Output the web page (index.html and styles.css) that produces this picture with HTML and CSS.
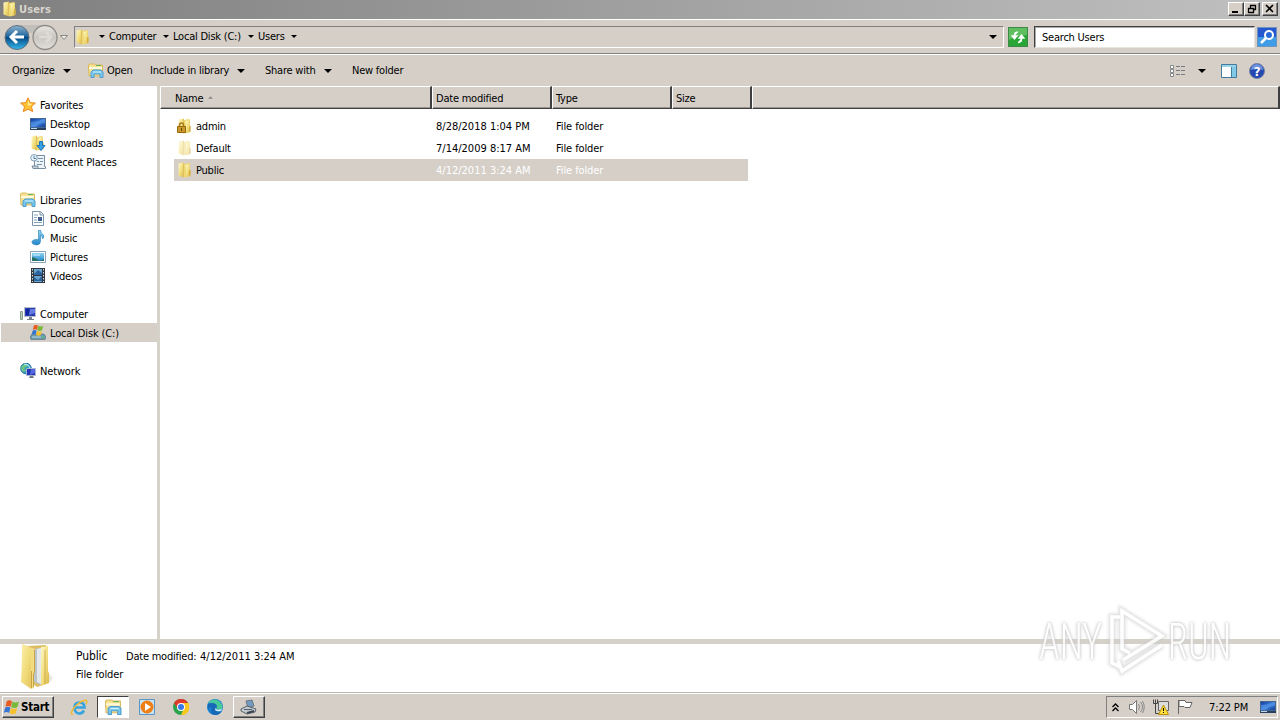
FILE: index.html
```
<!DOCTYPE html>
<html lang="en">
<head>
    <meta charset="UTF-8">
    <title>Users</title>
    <link rel="stylesheet" href="styles.css">
</head>
<body>
    <!-- Shared icons -->
    <svg class="defs" width="0" height="0">
        <defs>
            <linearGradient id="gold" x2="1" y2="1"><stop offset="0" stop-color="#fff9c9"/><stop offset=".5" stop-color="#f3df7e"/><stop offset="1" stop-color="#d9b546"/></linearGradient>
            <linearGradient id="blue" x2="1" y2="1"><stop offset="0" stop-color="#123c9c"/><stop offset=".5" stop-color="#3c7fdc"/><stop offset="1" stop-color="#123f96"/></linearGradient>
            <linearGradient id="sky" x2="0" y2="1"><stop offset="0" stop-color="#8ed4f4"/><stop offset="1" stop-color="#2386c8"/></linearGradient>
            <linearGradient id="back" x2="0" y2="1"><stop offset="0" stop-color="#8fb4cf"/><stop offset=".45" stop-color="#1f669f"/><stop offset=".5" stop-color="#064a85"/><stop offset="1" stop-color="#36b8ee"/></linearGradient>
            <linearGradient id="fwd" x2="0" y2="1"><stop offset="0" stop-color="#e9e7e3"/><stop offset=".5" stop-color="#c9c6c1"/><stop offset="1" stop-color="#e3e0db"/></linearGradient>
            <symbol id="folder" viewBox="0 0 16 16">
                <path d="M1.500 1.500L7 .5v15l-5.500-2z" fill="url(#gold)"/>
                <path d="M7 2l5-1 1 1v12l-5 1.500-1-.5z" fill="#efd873"/>
                <path d="M8.500 3L12 2v6l1.500 1v5l-4 1z" fill="url(#gold)"/>
                <path d="M6.500 1v14" stroke="#dfc15c" fill="none"/>
                <path d="M12 8.500l1.500-1v5L12 14z" fill="#d4ae3c"/>
            </symbol>
            <symbol id="library" viewBox="0 0 16 16">
                <path d="M.500 3V2l1-1h5l1 1h7v11H1z" fill="#f6e291" stroke="#d8b95f"/>
                <path d="M8 2.500h5" stroke="#62b45c"/>
                <path d="M1 5h13" stroke="#fffadb" stroke-width="2"/>
                <path d="M3 14.500V9l2-2h8l2 2v5.500h-3V11H6v3.500z" fill="#7cc8ec" stroke="#4c9cd0"/>
                <path d="M5 9h8" stroke="#c7effc"/>
            </symbol>
            <symbol id="monitor" viewBox="0 0 16 16">
                <path d="M0 2h16v10H0z" fill="#46678d"/>
                <path d="M1 3h14v8H1z" fill="url(#blue)"/>
                <path d="M1 6q7 0 13-3h1v4q-6 0-9 4H1z" fill="#5b9be9" opacity=".55"/>
                <path d="M0 12h16v2H0z" fill="#29405d"/><path d="M1 12.500h6" stroke="#bfd7e8"/>
            </symbol>
            <symbol id="pc" viewBox="0 0 16 16">
                <path d="M.500 5.500h2v8h-2z" fill="#b9d4a9" stroke="#8b9c92"/>
                <path d="M4.500 1.500h11v9h-11z" fill="#263eb0" stroke="#b7bfcc"/>
                <path d="M6 3h4l-1 6H6z" fill="#1425a0"/><path d="M10 3h5v4l-6 2z" fill="#657be4"/>
                <path d="M9 11h3v2h2v1H7v-1h2z" fill="#77818d"/>
            </symbol>
            <symbol id="flag" viewBox="0 0 16 16">
                <path d="M3.500 2q2.500-1.800 5 0L7.300 7.300q-2.500-1.600-5 0z" fill="#e95b21"/>
                <path d="M9 2.300q3 1.800 6 0L13.600 7.600q-3 1.800-5.900 0z" fill="#79b93a"/>
                <path d="M2 8.200q2.500-1.700 5 0l-1.300 5q-2.500-1.700-5 0z" fill="#3675d3"/>
                <path d="M7.500 8.500q3 1.800 5.900 0L12 13.500q-3 1.800-5.800 0z" fill="#f5c22e"/>
            </symbol>
            <symbol id="arrow" viewBox="0 0 8 4"><path d="M0 0h8L4 4z"/></symbol>
        </defs>
    </svg>

    <div class="window">
        <header class="titlebar">
            <svg class="icon"><use href="#folder"/></svg>
            <span class="title">Users</span>
            <div class="buttons">
                <button aria-label="Minimize"><svg width="12" height="10"><path d="M2 8h6" stroke="#000" stroke-width="2"/></svg></button>
                <button aria-label="Restore"><svg width="12" height="10"><path d="M4.500 4V1.500h5v4H8M4 1.500h6M2.500 4.500h5v4h-5zM2 4.500h6" fill="none" stroke="#000" stroke-width="1.300"/></svg></button>
                <button class="close" aria-label="Close"><svg width="12" height="10"><path d="M2 1l7 7M9 1L2 8" stroke="#000" stroke-width="1.600"/></svg></button>
            </div>
        </header>

        <nav class="navbar">
            <svg class="travel" width="68" height="28" viewBox="0 0 68 28">
                <path d="M15 2h27v8H15z" fill="#c2beb9"/>
                <circle cx="14" cy="14.500" r="12" fill="url(#back)" stroke="#626f7c"/>
                <path d="M8 14h13M14 8l-6 6 6 6" fill="none" stroke="#fff" stroke-width="3"/>
                <circle cx="42" cy="14.500" r="12" fill="url(#fwd)" stroke="#8e8c88" stroke-width="1.300"/>
                <path d="M36 14h12M43 9l5 5-5 5" fill="none" stroke="#dedbd6" stroke-width="2.500"/>
                <path d="M57.500 12.500h7l-3.500 4z" fill="#eee" stroke="#8b8884"/>
            </svg>
            <div class="address">
                <svg class="icon"><use href="#folder"/></svg>
                <svg class="crumb first"><use href="#arrow"/></svg><span class="w-computer">Computer</span>
                <svg class="crumb"><use href="#arrow"/></svg><span class="w-disk">Local Disk (C:)</span>
                <svg class="crumb"><use href="#arrow"/></svg><span class="w-users">Users</span>
                <svg class="crumb"><use href="#arrow"/></svg>
                <svg class="drop end"><use href="#arrow"/></svg>
            </div>
            <svg class="refresh" width="20" height="20">
                <rect x=".5" y=".5" width="19" height="19" fill="#2aa637" stroke="#3d8a48"/>
                <path d="M1 1h18v7q-9 0-18 5z" fill="#7ccd77" opacity=".65"/>
                <path d="M6.500 9V7.500q0-2 3.500-2.500M4 9h5l-2.500 3zM13.500 11v2q0 2-3.500 2.500M11 11h5l-2.500-3z" fill="#fff" stroke="#fff" stroke-width="1.300"/>
            </svg>
            <div class="search">Search Users</div>
            <svg class="go" width="20" height="20">
                <rect x=".5" y=".5" width="19" height="19" fill="#2558cf" stroke="#6d92bb"/>
                <path d="M1 10h18v9H1z" fill="#4bb9ef" opacity=".7"/>
                <circle cx="12" cy="8" r="4" fill="#2869da" stroke="#fff" stroke-width="2"/><path d="M9 11l-5 5" stroke="#fff" stroke-width="2.500"/>
            </svg>
        </nav>

        <div class="toolbar">
            <span class="item organize">Organize</span><svg class="drop"><use href="#arrow"/></svg>
            <svg class="icon open-icon"><use href="#library"/></svg><span class="item open">Open</span>
            <span class="item include">Include in library</span><svg class="drop"><use href="#arrow"/></svg>
            <span class="item share">Share with</span><svg class="drop"><use href="#arrow"/></svg>
            <span class="item new">New folder</span>
            <div class="view-tools">
                <svg width="16" height="14"><path d="M.500 1.500h3v3h-3zM.500 5.500h3v3h-3zM.500 9.500h3v3h-3z" fill="#fff" stroke="#85898c"/><path d="M6 2.500h4M11 2.500h4M6 6.500h4M11 6.500h4M6 10.500h4M11 10.500h4" stroke="#777b82"/></svg>
                <svg class="drop"><use href="#arrow"/></svg>
                <svg class="pane" width="16" height="14"><path d="M.500.500h15v13H.500z" fill="#fff" stroke="#437b9c"/><path d="M1 2h14" stroke="#99d3ea" stroke-width="2"/><path d="M10.500 3v10" stroke="#437b9c"/><path d="M11 3h4v10h-4z" fill="#80cae8"/></svg>
                <svg class="help" width="16" height="16"><circle cx="8" cy="8" r="7.500" fill="#2448b0" stroke="#7784a1"/><path d="M2 7a6 6 0 0 1 12 0q-6-2-12 0" fill="#6d91dd"/><text x="8" y="12.500">?</text></svg>
            </div>
        </div>

        <main class="body">
            <aside class="sidebar">
                <div class="row group"><svg class="icon" viewBox="0 0 16 16"><path d="M8 .8l2.200 4.800 5.200.5-3.900 3.500 1.200 5.100L8 12.100l-4.700 2.600 1.200-5.100L.600 6.100l5.200-.5z" fill="#ffc235" stroke="#e98824"/><path d="M8 3l1.400 3.500 3 .4L8 9z" fill="#fff0a0"/></svg><span>Favorites</span></div>
                <div class="row"><svg class="icon"><use href="#monitor"/></svg><span>Desktop</span></div>
                <div class="row"><svg class="icon" viewBox="0 0 16 16"><use href="#folder"/><path d="M9.500 6.500h3v4H15l-4 5-4-5h2.500z" fill="#38a2e5" stroke="#1b72b7"/></svg><span>Downloads</span></div>
                <div class="row"><svg class="icon" viewBox="0 0 16 16"><path d="M4.500 1.500h10v11h1v2h-11z" fill="#edf3f7" stroke="#798e9f"/><path d="M8 4.500h5M7 7.500h2M10 7.500h3M7 10.500h5" stroke="#6d94b2"/><circle cx="4" cy="3.800" r="3.300" fill="#e8f5ff" stroke="#839cae"/><path d="M4 2v2.500h2" fill="none" stroke="#587895"/><path d="M2 12h6v2.500H3z" fill="#c3d0da" stroke="#798e9f"/></svg><span>Recent Places</span></div>
                <div class="row group space"><svg class="icon"><use href="#library"/></svg><span>Libraries</span></div>
                <div class="row"><svg class="icon" viewBox="0 0 16 16"><path d="M2.500.500h8l3 3v11h-11z" fill="#fff" stroke="#7d94a8"/><path d="M10 1v3h3" fill="#d8e5ee" stroke="#7d94a8"/><path d="M4 4h4M4 6.500h3M4 9h3M4 11.500h8" stroke="#7fa5c4"/><path d="M8 6h4v4H8z" fill="#3f5f90"/></svg><span>Documents</span></div>
                <div class="row"><svg class="icon" viewBox="0 0 16 16"><path d="M8.500 0h2q0 3 3 5 1 2-1 4 0-3-2-4v6q0 4-4 4-5-.5-4.500-3.500Q3 9 8.500 9.500z" fill="url(#sky)" stroke="#287fb9" stroke-width=".6"/></svg><span>Music</span></div>
                <div class="row"><svg class="icon" viewBox="0 0 16 16"><path d="M.500 2.500h15v11H.500z" fill="#fff" stroke="#8ba2b4"/><path d="M2 4h12v8H2z" fill="url(#sky)"/><path d="M2 8q4 1 6 3t6-1v2H2z" fill="#286f66"/><path d="M3 6h7" stroke="#d7f4ff"/></svg><span>Pictures</span></div>
                <div class="row"><svg class="icon" viewBox="0 0 16 16"><path d="M1 0h14v15H1z" fill="#303941"/><path d="M4 1h8v6H4zM4 8h8v6H4z" fill="#68a5d1"/><path d="M4 6l4-4 4 3v2H4zM4 9l4 3 4-4v5H4z" fill="#2b639c"/><path d="M2.500 1v13M13.500 1v13" stroke="#d4dade" stroke-dasharray="1.500 1.500"/></svg><span>Videos</span></div>
                <div class="row group space"><svg class="icon"><use href="#pc"/></svg><span>Computer</span></div>
                <div class="row selected"><svg class="icon" viewBox="0 0 16 16"><path d="M2 9h12l2 3-1 2.500H1L0 12z" fill="#6c9aab" stroke="#587786" stroke-width=".7"/><path d="M2 12h9" stroke="#b6d9df"/><path d="M12 12h2" stroke="#42e05b"/><svg x="1" y="-1" width="13" height="13" viewBox="0 0 16 16"><use href="#flag"/></svg></svg><span>Local Disk (C:)</span></div>
                <div class="row group space"><svg class="icon" viewBox="0 0 16 16"><circle cx="6" cy="5.500" r="5.300" fill="#329ac5" stroke="#2374a6"/><path d="M2 3q4-4 6 0L4 5l2 3-3 1q-3-3-1-6" fill="#6ec584"/><path d="M4 1q5 0 6 4" stroke="#c9f1f4" fill="none"/><path d="M6.500 5.500h9v7h-9z" fill="#2335b5" stroke="#aab6cd"/><path d="M11 6h4v4l-5 2z" fill="#5368df"/><path d="M10 13h3l1 2H9z" fill="#6e7982"/></svg><span>Network</span></div>
            </aside>

            <section class="files">
                <div class="columns">
                    <div class="name">Name<svg class="sort" viewBox="0 0 6 3"><path d="M0 3h6L3 0z"/></svg></div>
                    <div>Date modified</div>
                    <div>Type</div>
                    <div class="size">Size</div>
                    <div class="rest"></div>
                </div>
                <div class="list">
                    <div class="file"><span class="name"><svg class="icon" viewBox="0 0 16 16"><use href="#folder"/><path d="M2.500 9V7q0-2 2-2t2 2v2" fill="none" stroke="#a77918" stroke-width="1.500"/><path d="M.500 8.500h8v6h-8z" fill="#c99a2b" stroke="#96690e"/><path d="M4.500 10v3" stroke="#704c07"/></svg>admin</span><span class="date">8/28/2018 1:04 PM</span><span class="type">File folder</span></div>
                    <div class="file faded"><span class="name"><svg class="icon"><use href="#folder"/></svg>Default</span><span class="date">7/14/2009 8:17 AM</span><span class="type">File folder</span></div>
                    <div class="file selected"><span class="name"><svg class="icon"><use href="#folder"/></svg>Public</span><span class="date">4/12/2011 3:24 AM</span><span class="type">File folder</span></div>
                </div>
            </section>
        </main>

        <footer class="details">
            <svg class="big-folder" width="36" height="46" viewBox="0 0 36 46">
                <path d="M26 26l7 8-3 4-8 3z" fill="#e3e1d8" opacity=".8"/>
                <path d="M8 2l18-1v39l-9 3-9-7z" fill="#ddbd63"/>
                <path d="M14 5l7-1v37l-7-3z" fill="#bcc5cc"/><path d="M17 5l4-1v36l-4-2z" fill="#e4e8ea"/>
                <path d="M21 3l7-1v25l1 2v10l-8 3z" fill="url(#gold)"/><path d="M25 6v34" stroke="#cfae55"/>
                <path d="M2 0l13 5v22l-1 2v15l-3 1-10-7 1-13z" fill="#f2dd82"/><path d="M2 0l9 5v39L1 38z" fill="url(#gold)" opacity=".6"/>
                <path d="M11.500 27v17M14.500 6v22l-1 2v13" stroke="#c9a545" fill="none"/>
            </svg>
            <div class="details-text">
                <div><span class="detail-name">Public</span><span class="detail-label">Date modified:</span><span class="detail-date">4/12/2011 3:24 AM</span></div>
                <div class="type">File folder</div>
            </div>
        </footer>

        <div class="taskbar">
            <button class="start"><svg width="17" height="17"><use href="#flag"/></svg>Start</button>
            <div class="tasks">
                <div class="task"><svg width="18" height="18" viewBox="0 0 18 18"><path d="M14 12.500q-2 3.500-5.500 3-4-1-4-6t5-5 5 5H5" fill="none" stroke="#36a4df" stroke-width="2.600"/><path d="M3 16.500Q-1 16 5 8.500 13 1 16.500 2.500q1 1-.5 4" fill="none" stroke="#edb930" stroke-width="1.400"/></svg></div>
                <div class="task active"><svg width="17" height="17"><use href="#library"/></svg></div>
                <div class="task"><svg width="16" height="16"><path d="M.500.500h15v15H.500z" fill="#cce2f2" stroke="#5797ca"/><circle cx="8" cy="8" r="6.500" fill="#ed7f15"/><path d="M6 4l6 4-6 4z" fill="#fff"/></svg></div>
                <div class="task"><svg width="16" height="16" viewBox="0 0 16 16"><circle cx="8" cy="8" r="8" fill="#2ba34c"/><path d="M7 4h8.500A8 8 0 0 1 8 16l3-7z" fill="#f9c71e"/><path d="M1 4L5 10 8 4h7A8 8 0 0 0 1 4" fill="#df382c"/><circle cx="8" cy="8" r="4" fill="#fff"/><circle cx="8" cy="8" r="3" fill="#3977e8"/></svg></div>
                <div class="task"><svg width="16" height="16" viewBox="0 0 16 16"><circle cx="8" cy="8" r="8" fill="#167fcf"/><path d="M1 5Q5-2 12 2q5 4 3 8-5 2-6-1 1-4-3-4-3-2-5 0" fill="#49c89a"/><path d="M1 5q7-3 9 2 0 2-2 4 3 3 7 1-4 6-10 3-2-3 0-7-3 0-4 2z" fill="#1868b8"/><path d="M9 8q-1 4 6 2l-1 2q-4 1-6-1z" fill="#d7eff6"/></svg></div>
                <div class="task raised"><svg width="18" height="17"><path d="M6 2l6-1 2 6-6 2z" fill="#719bc0" stroke="#6b7782"/><path d="M1 10l6-3 9 3-1 3-8 2-6-3z" fill="#c2c8cb" stroke="#59626b"/><path d="M4 10.500h8" stroke="#4e6376"/><path d="M7 14l7-2" stroke="#3b4650" stroke-width="2"/></svg></div>
            </div>
            <div class="tray">
                <svg class="chev" width="7" height="9"><path d="M.500 4l3-3 3 3M.500 8l3-3 3 3" fill="none" stroke="#000" stroke-width="1.300"/></svg>
                <svg class="sound" width="16" height="16"><path d="M.500 5.500h3l4-4v13l-4-4h-3z" fill="#fff" stroke="#777"/><path d="M9.500 5q2 3 0 6M11.500 3q4 5 0 10M13.500 2q3.500 6 0 12" fill="none" stroke="#888"/></svg>
                <svg class="net" width="16" height="16"><path d="M5.500 2.500h10v9h-10z" fill="#ddd" stroke="#666"/><path d="M.500.500v4h4v-4M2.500.500v14h5" fill="none" stroke="#444"/><path d="M10.500 6l5 9.500h-10z" fill="#ffe13a" stroke="#bd920a"/><path d="M10.500 9v3M10.500 13v1" stroke="#000"/></svg>
                <svg class="action" width="16" height="16"><path d="M1.500 1v14M2 1.500h6l1 2h6l-2 5H8l-1-1H2z" fill="#fff" stroke="#666"/></svg>
                <span class="clock">7:22 PM</span>
                <svg class="icon"><use href="#monitor"/></svg>
            </div>
        </div>
    </div>

    <!-- Overlay logo -->
    <svg class="watermark" width="210" height="76" viewBox="0 0 210 76">
        <defs>
            <path id="play" d="M90 14h-8v46l8 4M100 50l-8-4V8l40 25-39 24M88 58l4 10 40-26"/>
        </defs>
        <g class="glow"><use href="#play"/></g>
        <g class="mark"><use href="#play"/></g>
        <text x="9" y="56" textLength="63" lengthAdjust="spacingAndGlyphs">ANY</text>
        <text x="138" y="56" textLength="63" lengthAdjust="spacingAndGlyphs">RUN</text>
    </svg>
</body>
</html>
```
FILE: styles.css
```
* { box-sizing: border-box; }

body {
    margin: 0;
    overflow: hidden;
    background: #d5cfc8;
    color: #000;
    font-family: "DejaVu Sans Condensed", "DejaVu Sans", sans-serif;
    font-stretch: condensed;
    font-size: 11px;
    letter-spacing: -0.22px;
    white-space: nowrap;
}

svg { display: block; flex-shrink: 0; }
button { font: inherit; letter-spacing: inherit; padding: 0; }
.defs { position: absolute; }
.icon { width: 16px; height: 16px; }

.window {
    width: 1280px;
    height: 720px;
    display: flex;
    flex-direction: column;
}

/* Title bar */
.titlebar {
    height: 19px;
    display: flex;
    align-items: center;
    padding: 0 2px 1px;
    background: linear-gradient(90deg, #808080, #c0c0c0);
    color: #d8d4cd;
    font-weight: bold;
}

.title { margin-left: 1px; letter-spacing: 0.1px; }
.buttons { margin-left: auto; display: flex; }

.buttons button, .start, .task.raised {
    background: #d5cfc8;
    border: 1px solid;
    border-color: #fff #404040 #404040 #fff;
    box-shadow: inset -1px -1px #808080;
}

.buttons button { width: 16px; height: 14px; padding: 1px; }
.buttons .close { margin-left: 2px; }

/* Navigation row */
.navbar {
    height: 35px;
    display: flex;
    align-items: center;
    padding: 0 2px 0 3px;
    border-top: 1px solid #fff;
    border-bottom: 1px solid #808080;
}

.address {
    width: 930px;
    height: 22px;
    margin-left: 3px;
    display: flex;
    align-items: center;
    border: 1px solid;
    border-color: #808080 #fff #fff #808080;
}

.crumb { width: 6px; height: 3px; margin: 0 4px; }
.crumb.first { margin-left: 8px; }
.w-computer { width: 50px; }
.w-disk { width: 71px; }
.w-users { width: 29px; }
.drop { width: 8px; height: 4px; }
.end { margin: 0 6px 0 auto; }
.refresh { margin: 0 6px 0 4px; }

.search {
    width: 221px;
    height: 22px;
    padding: 4px 0 0 7px;
    background: #fff;
    border: 1px solid;
    border-color: #404040 #e8e4de #e8e4de #404040;
    box-shadow: inset 1px 1px #aaa;
}

.go { margin-left: 2px; }

/* Command toolbar */
.toolbar {
    height: 32px;
    display: flex;
    align-items: center;
    padding-left: 12px;
    border-top: 1px solid #fff;
}

.organize { width: 51px; }
.open-icon { margin-left: 17px; }
.open { width: 43px; margin-left: 3px; }
.include { width: 87px; }
.share { width: 59px; margin-left: 20px; }
.new { margin-left: 20px; }

.view-tools {
    margin-left: auto;
    padding-right: 15px;
    display: flex;
    align-items: center;
}

.view-tools .drop { margin-left: 12px; }
.pane { margin-left: 15px; }
.help { margin-left: 12px; }

.help text {
    fill: #fff;
    font-size: 13px;
    font-weight: bold;
    text-anchor: middle;
}

/* Folder tree */
.body { height: 553px; display: flex; }

.sidebar {
    width: 160px;
    padding-top: 9px;
    background: #fff;
    border-right: 3px solid #d5d2ca;
}

.row {
    height: 19px;
    margin-left: 1px;
    padding-left: 29px;
    display: flex;
    align-items: center;
    gap: 4px;
    letter-spacing: -0.15px;
}

.row span { padding-top: 2px; }
.group { padding-left: 19px; }
.space { margin-top: 19px; }
.selected { background: #d5cfc8; }

/* File list */
.files { flex: 1; background: #fff; }
.columns { height: 23px; display: flex; }

.columns div {
    width: 120px;
    padding: 5px 0 0 3px;
    background: #d5cfc8;
    border: 1px solid;
    border-color: #fff #404040 #404040 #fff;
    border-right-width: 2px;
    box-shadow: inset 0 -1px #9a9690;
}

.columns div.name { width: 272px; padding-left: 14px; display: flex; }
.sort { width: 5px; height: 3px; margin: 4px 0 0 5px; fill: #8d8984; }
.columns div.size { width: 80px; }
.columns div.rest { flex: 1; }

.list { padding: 6px 0 0 14px; }
.file { width: 574px; height: 22px; padding-left: 3px; display: flex; align-items: center; }
.file .name { width: 259px; display: flex; align-items: center; gap: 3px; }
.file .date { width: 120px; letter-spacing: 0; }
.type { letter-spacing: -0.1px; }
.file.selected .date, .file.selected .type { color: #fff; }
.faded .icon { opacity: .5; }

/* Details pane */
.details {
    height: 54px;
    display: flex;
    background: #fff;
    border-top: 5px solid #d5d0c8;
    border-bottom: 1px solid #bbb8b2;
}

.big-folder { margin-left: 20px; }
.details-text { margin-left: 20px; line-height: 18px; padding-top: 3px; }
.details-text span { display: inline-block; }
.detail-name { width: 50px; font-size: 12px; letter-spacing: -0.1px; }
.detail-label { width: 74px; }
.detail-date { letter-spacing: 0; }

/* Taskbar */
.taskbar {
    height: 27px;
    display: flex;
    align-items: center;
    padding: 0 2px;
    border-top: 1px solid #fff;
}

.start {
    width: 52px;
    height: 22px;
    display: flex;
    align-items: center;
    gap: 1px;
    font-size: 11.5px;
    font-weight: bold;
}

.tasks { display: flex; margin-left: 9px; gap: 2px; }
.task { width: 32px; height: 22px; display: flex; align-items: center; justify-content: center; }
.task.active { background: #fff; border: 1px solid; border-color: #404040 #fff #fff #404040; }

.tray {
    width: 172px;
    height: 22px;
    margin-left: auto;
    display: flex;
    align-items: center;
    padding-left: 5px;
    border: 1px solid;
    border-color: #808080 #fff #fff #808080;
}

.sound { margin-left: 10px; }
.net, .action { margin-left: 8px; }
.clock { width: 41px; margin: 0 10px 0 16px; letter-spacing: -0.1px; }

/* Logo lies over the list and the details pane */
.watermark { position: absolute; left: 1030px; top: 603px; opacity: .85; }

.watermark text {
    font-family: Roboto, "Liberation Sans", sans-serif;
    font-size: 50px;
    font-weight: 300;
    letter-spacing: 0;
    fill: #fff;
    filter: drop-shadow(0 0 1.5px #bbb) drop-shadow(0 0 1.5px #ddd);
}

.watermark path { fill: none; }
.glow { filter: blur(1.5px); stroke: #ccc; stroke-width: 7; opacity: .75; }
.mark { stroke: #fff; stroke-width: 3.5; }
```
